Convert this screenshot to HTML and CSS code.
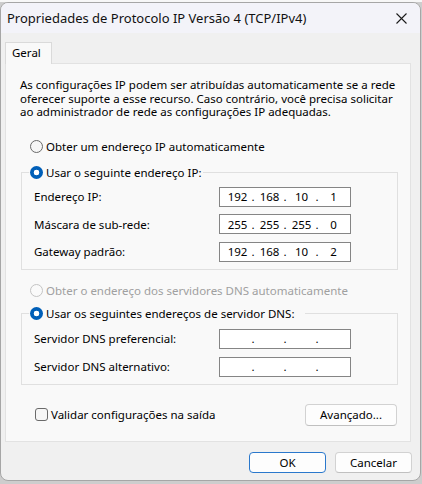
FILE: index.html
```html
<!DOCTYPE html>
<html lang="pt-BR">
<head>
<meta charset="utf-8">
<title>Propriedades de Protocolo IP Versão 4 (TCP/IPv4)</title>
<link rel="stylesheet" href="styles.css">
</head>
<body>
<div class="desk"></div>
<div class="window">
  <div class="titlebar">
    <span class="title">Propriedades de Protocolo IP Versão 4 (TCP/IPv4)</span>
    <span class="close"><svg width="11" height="11" viewBox="0 0 11 11"><path d="M0.5 0.5L10.5 10.5M10.5 0.5L0.5 10.5" stroke="#1b1b1b" stroke-width="1.1" fill="none"/></svg></span>
  </div>
  <div class="body">
    <div class="tabs"><div class="tab">Geral</div></div>
    <div class="panel">
      <p class="intro">As configurações IP podem ser atribuídas automaticamente se a rede<br>oferecer suporte a esse recurso. Caso contrário, você precisa solicitar<br>ao administrador de rede as configurações IP adequadas.</p>

      <div class="option opt1"><span class="radio"></span><span>Obter um endereço IP automaticamente</span></div>

      <fieldset class="group g1">
        <legend class="leg1"><span class="radio on"></span><span>Usar o seguinte endereço IP:</span></legend>
        <div class="rows">
          <div class="row"><span class="lbl">Endereço IP:</span><div class="ip"><span>192</span><i>.</i><span>168</span><i>.</i><span>10</span><i>.</i><span>1</span></div></div>
          <div class="row"><span class="lbl">Máscara de sub-rede:</span><div class="ip"><span>255</span><i>.</i><span>255</span><i>.</i><span>255</span><i>.</i><span>0</span></div></div>
          <div class="row"><span class="lbl">Gateway padrão:</span><div class="ip"><span>192</span><i>.</i><span>168</span><i>.</i><span>10</span><i>.</i><span>2</span></div></div>
        </div>
      </fieldset>

      <div class="option opt2 disabled"><span class="radio"></span><span>Obter o endereço dos servidores DNS automaticamente</span></div>

      <fieldset class="group g2">
        <legend class="leg2"><span class="radio on"></span><span>Usar os seguintes endereços de servidor DNS:</span></legend>
        <div class="rows">
          <div class="row"><span class="lbl">Servidor DNS preferencial:</span><div class="ip"><span></span><i>.</i><span></span><i>.</i><span></span><i>.</i><span></span></div></div>
          <div class="row"><span class="lbl">Servidor DNS alternativo:</span><div class="ip"><span></span><i>.</i><span></span><i>.</i><span></span><i>.</i><span></span></div></div>
        </div>
      </fieldset>

      <div class="checkrow">
        <span class="check"></span><span class="checklbl">Validar configurações na saída</span>
        <button class="btn adv">Avançado...</button>
      </div>
    </div>
    <div class="footer">
      <button class="btn ok">OK</button>
      <button class="btn cancel">Cancelar</button>
    </div>
  </div>
</div>
</body>
</html>
```
FILE: styles.css
```css
* { box-sizing: border-box; }
html, body { margin: 0; padding: 0; }
body {
  width: 422px;
  height: 484px;
  overflow: hidden;
  background: #cdcdcd;
  font-family: "Noto Sans", "Open Sans", sans-serif;
  font-size: 11.5px;
  color: #000;
}
.desk { height: 2px; background: #f7f7f7; }
.window {
  width: 421px;
  height: 479px;
  background: #f0f0f0;
  border: 1px solid #a6a6a6;
  border-radius: 8px;
  overflow: hidden;
  display: flex;
  flex-direction: column;
}
.titlebar {
  height: 30px;
  flex: none;
  background: #f3f3f9;
  display: flex;
  align-items: center;
  padding-left: 6px;
}
.title { font-size: 13px; color: #111; }
.close { margin-left: auto; margin-right: 13px; display: flex; }
.body { padding: 9px 0 0 4px; }
.tabs { display: flex; }
.tab {
  width: 47px;
  height: 22px;
  margin-bottom: -1px;
  border: 1px solid #dadada;
  border-bottom: none;
  background: #f9f9f9;
  padding-left: 6px;
  line-height: 20px;
  position: relative;
  z-index: 1;
}
.panel {
  width: 406px;
  height: 379px;
  background: #f9f9f9;
  border: 1px solid #e2e2e2;
  display: flex;
  flex-direction: column;
}
.intro {
  margin: 14px 0 0 14px;
  line-height: 13.5px;
  white-space: nowrap;
}
.option {
  display: flex;
  align-items: center;
  height: 16px;
  margin-left: 24px;
}
.opt1 { margin-top: 20px; }
.opt2 { margin-top: 13px; }
.disabled { color: #a0a0a0; }
.radio {
  width: 13px;
  height: 13px;
  border-radius: 50%;
  border: 1px solid #6a6a6a;
  background: #f6f6f6;
  margin-right: 3px;
  flex: none;
}
.disabled .radio { border-color: #c4c4c4; background: #fafafa; }
.radio.on {
  border: none;
  background: radial-gradient(circle, #ffffff 0 2.6px, #005fb8 3.1px);
}
.group {
  margin: 0 0 0 15px;
  width: 377px;
  padding: 0 0 7px 12px;
  border: 1px solid #e0e0e0;
  min-width: 0;
}
.g1 { margin-top: 10px; }
.g2 { margin-top: 7px; }
.group legend {
  display: flex;
  align-items: center;
  height: 16px;
  margin-left: -5px;
  padding: 0 0 0 1px;
}
.leg1 { width: 174px; }
.leg2 { width: 276px; }
.rows {
  display: flex;
  flex-direction: column;
  gap: 7.5px;
  padding-top: 6px;
}
.g2 .rows { padding-top: 7px; gap: 8px; }
.row { display: flex; align-items: center; height: 20px; }
.lbl { width: 185px; flex: none; }
.ip {
  width: 132px;
  height: 20px;
  border: 1px solid #858585;
  background: #ffffff;
  display: flex;
  align-items: center;
  padding: 0 2px;
}
.ip span { flex: 1; text-align: center; padding-left: 1px; }
.ip i { font-style: normal; width: 2px; display: flex; justify-content: center; }
.checkrow {
  display: flex;
  align-items: center;
  margin: 19px 13px 0 29px;
}
.check {
  width: 13px;
  height: 13px;
  border: 1px solid #6a6a6a;
  border-radius: 3px;
  background: #f6f6f6;
  margin-right: 3px;
}
.btn {
  font: inherit;
  color: #000;
  background: #fdfdfd;
  border: 1px solid #d2d2d2;
  border-bottom-color: #c0c0c0;
  border-radius: 4px;
  padding: 0;
}
.adv { margin-left: auto; width: 92px; height: 22px; }
.footer {
  display: flex;
  justify-content: flex-end;
  gap: 9px;
  margin: 10px 8px 0 0;
}
.ok, .cancel { width: 77px; height: 21px; }
.ok { border: 1px solid #2a78cc; }
```
